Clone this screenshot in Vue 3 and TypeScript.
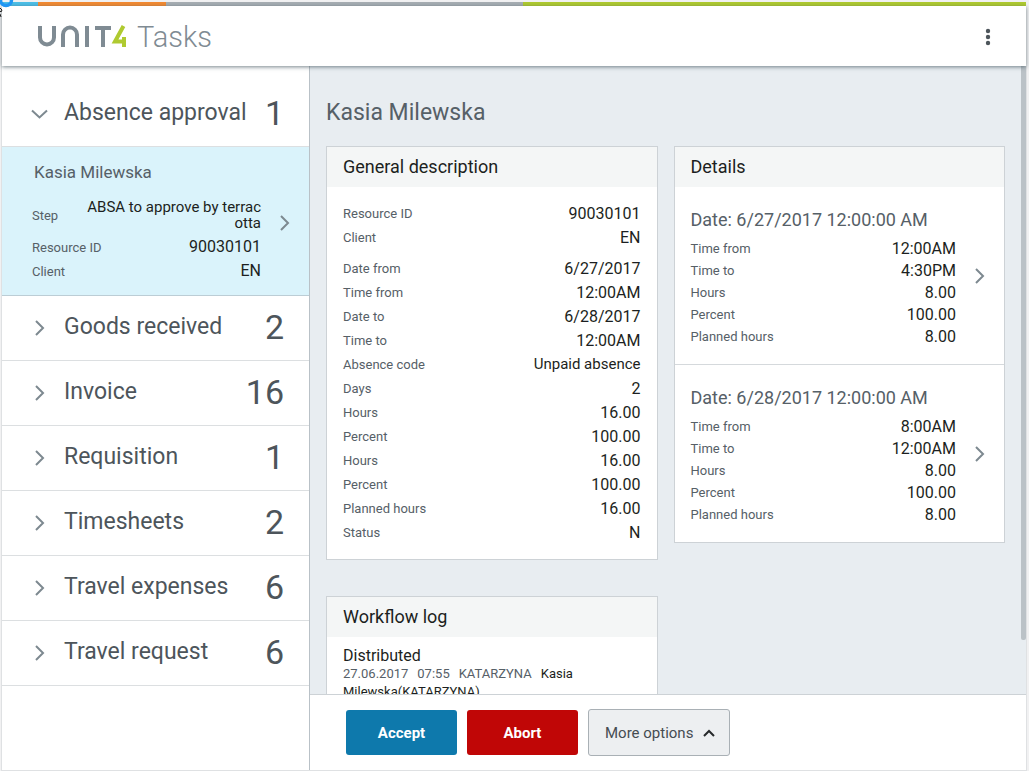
<script setup lang="ts">
import { ref } from 'vue'

interface Field {
  label: string
  value: string
  gap?: boolean
  words?: boolean
}

interface Category {
  name: string
  count: number
}

interface DetailEntry {
  title: string
  fields: Field[]
}

const openCategory = ref<string>('Absence approval')

const categories: Category[] = [
  { name: 'Absence approval', count: 1 },
  { name: 'Goods received', count: 2 },
  { name: 'Invoice', count: 16 },
  { name: 'Requisition', count: 1 },
  { name: 'Timesheets', count: 2 },
  { name: 'Travel expenses', count: 6 },
  { name: 'Travel request', count: 6 },
]

const taskFields: Field[] = [
  { label: 'Step', value: 'ABSA to approve by terracotta', words: true },
  { label: 'Resource ID', value: '90030101' },
  { label: 'Client', value: 'EN' },
]

const general: Field[] = [
  { label: 'Resource ID', value: '90030101' },
  { label: 'Client', value: 'EN' },
  { label: 'Date from', value: '6/27/2017', gap: true },
  { label: 'Time from', value: '12:00AM' },
  { label: 'Date to', value: '6/28/2017' },
  { label: 'Time to', value: '12:00AM' },
  { label: 'Absence code', value: 'Unpaid absence', words: true },
  { label: 'Days', value: '2' },
  { label: 'Hours', value: '16.00' },
  { label: 'Percent', value: '100.00' },
  { label: 'Hours', value: '16.00' },
  { label: 'Percent', value: '100.00' },
  { label: 'Planned hours', value: '16.00' },
  { label: 'Status', value: 'N' },
]

const details: DetailEntry[] = [
  {
    title: 'Date: 6/27/2017 12:00:00 AM',
    fields: [
      { label: 'Time from', value: '12:00AM' },
      { label: 'Time to', value: '4:30PM' },
      { label: 'Hours', value: '8.00' },
      { label: 'Percent', value: '100.00' },
      { label: 'Planned hours', value: '8.00' },
    ],
  },
  {
    title: 'Date: 6/28/2017 12:00:00 AM',
    fields: [
      { label: 'Time from', value: '8:00AM' },
      { label: 'Time to', value: '12:00AM' },
      { label: 'Hours', value: '8.00' },
      { label: 'Percent', value: '100.00' },
      { label: 'Planned hours', value: '8.00' },
    ],
  },
]

function toggle(name: string): void {
  openCategory.value = openCategory.value === name ? '' : name
}
</script>

<template>
  <div class="frame">
    <svg class="cursor" width="16" height="18" viewBox="0 0 16 18" aria-hidden="true">
      <circle cx="6" cy="0" r="5.500" fill="none" stroke="#2196f3" stroke-width="3.500" />
      <path d="M0 8L2 10L1 12L0 11M0 14L1 17" fill="none" stroke="#222" stroke-width="1" />
    </svg>
    <div class="strip"><i class="blue"></i><i class="orange"></i><i class="gray"></i><i class="green"></i></div>
    <header class="topbar">
      <h1 class="brand">
        <svg class="logo" width="90" height="24" viewBox="0 0 90 24" role="img" aria-label="Unit4">
          <g fill="none" stroke="#7f8b93" stroke-width="4">
            <path d="M2 1V12.500A7 7 0 0 0 16 12.500V1" />
            <path d="M25 22V9.500A7 7 0 0 1 39 9.500V22" />
            <path d="M49 1V22M57 3H73M65 3V22" />
          </g>
          <path d="M85.500 1L77 16.500H88M86 12V22" fill="none" stroke="#afca30" stroke-width="4" />
        </svg>
        <span>Tasks</span>
      </h1>
      <button class="kebab" type="button" aria-label="Menu">
        <svg width="8" height="18" viewBox="0 0 8 18" fill="#4d555b">
          <circle cx="4" cy="3" r="2.200" /><circle cx="4" cy="9" r="2.200" /><circle cx="4" cy="15" r="2.200" />
        </svg>
      </button>
    </header>
    <div class="body">
      <nav class="sidebar">
        <template v-for="c in categories" :key="c.name">
          <button class="category" type="button" :aria-expanded="openCategory === c.name" @click="toggle(c.name)">
            <svg class="chev" width="18" height="18" viewBox="0 0 18 18">
              <path v-if="openCategory === c.name" d="M2 6.500L9.500 13.500L17 6.500" />
              <path v-else d="M6 3L13 10L6 17" />
            </svg>
            <span class="name">{{ c.name }}</span>
            <span class="count">{{ c.count }}</span>
          </button>
          <a v-if="c.name === 'Absence approval' && openCategory === c.name" class="task" href="#task">
            <div class="task-main">
              <h2>Kasia Milewska</h2>
              <dl>
                <div v-for="f in taskFields" :key="f.label" class="field">
                  <dt>{{ f.label }}</dt>
                  <dd :class="{ words: f.words }">{{ f.value }}</dd>
                </div>
              </dl>
            </div>
            <svg class="chev" width="18" height="18" viewBox="0 0 18 18"><path d="M6 2L13 9L6 16" /></svg>
          </a>
        </template>
      </nav>
      <div class="content">
        <main id="task" class="detail">
          <h2 class="title">Kasia Milewska</h2>
          <div class="columns">
            <div class="column">
              <section class="card">
                <h3>General description</h3>
                <dl class="general">
                  <div v-for="(f, i) in general" :key="i" class="field" :class="{ gap: f.gap }">
                    <dt>{{ f.label }}</dt>
                    <dd :class="{ words: f.words }">{{ f.value }}</dd>
                  </div>
                </dl>
              </section>
              <section class="card">
                <h3>Workflow log</h3>
                <div class="log">
                  <p class="state">Distributed</p>
                  <p class="entry">
                    <time>27.06.2017</time><time>07:55</time><span class="user">KATARZYNA</span><span>Kasia Milewska</span>
                    <span>(KATARZYNA)</span>
                  </p>
                </div>
              </section>
            </div>
            <div class="column">
              <section class="card">
                <h3>Details</h3>
                <a v-for="d in details" :key="d.title" class="entry-link" href="#task">
                  <div class="entry-main">
                    <h4>{{ d.title }}</h4>
                    <dl>
                      <div v-for="f in d.fields" :key="f.label" class="field">
                        <dt>{{ f.label }}</dt>
                        <dd>{{ f.value }}</dd>
                      </div>
                    </dl>
                  </div>
                  <svg class="chev" width="18" height="18" viewBox="0 0 18 18"><path d="M6 2L13 9L6 16" /></svg>
                </a>
              </section>
            </div>
          </div>
          <div class="scroll-thumb"></div>
        </main>
        <footer class="actions">
          <button class="accept" type="button">Accept</button>
          <button class="abort" type="button">Abort</button>
          <button class="more" type="button">
            More options
            <svg width="14" height="10" viewBox="0 0 14 10"><path d="M2 8L7 3L12 8" fill="none" stroke="#26292b" stroke-width="2" /></svg>
          </button>
        </footer>
      </div>
    </div>
  </div>
</template>

<style>
body {
  margin: 0;
  background: #f1f1f2;
}
</style>

<style scoped>
* {
  box-sizing: border-box;
  margin: 0;
}

.frame {
  display: flex;
  flex-direction: column;
  height: 100vh;
  padding: 2px 2px 0 1px;
  font-family: Roboto, 'Liberation Sans', sans-serif;
  font-size: 16px;
  color: #1c1f21;
}

h1,
h2,
h3,
h4 {
  font-weight: 400;
}

button {
  font: inherit;
  color: inherit;
  cursor: pointer;
}

a {
  color: inherit;
  text-decoration: none;
}

.cursor {
  position: absolute;
  top: 0;
  left: 0;
  z-index: 5;
}

.strip {
  display: flex;
  flex: none;
  height: 4px;
  margin: 0 1px;
}

.blue {
  width: 36px;
  background: #4dbfe8;
}

.orange {
  width: 128px;
  background: #f38b33;
}

.gray {
  flex: 357;
  background: #a7aeb3;
}

.green {
  flex: 503;
  background: #afca30;
}

.topbar {
  display: flex;
  flex: none;
  align-items: center;
  justify-content: space-between;
  height: 60px;
  margin: 0 1px;
  padding: 2px 34px 0 36px;
  background: #fff;
  box-shadow: 0 1px 4px rgba(60, 80, 90, 0.7);
  position: relative;
  z-index: 2;
}

.brand {
  display: flex;
  align-items: center;
  gap: 9px;
  color: #7f8b93;
  font-size: 29px;
  font-weight: 300;
  line-height: 40px;
}

.kebab {
  display: flex;
  padding: 0;
  border: 0;
  background: none;
}

.body {
  display: flex;
  flex: 1;
  min-height: 0;
  border: 1px solid #dfe1e3;
  border-top: 0;
  background: #fff;
}

.sidebar {
  flex: 0 0 308px;
  padding-top: 16px;
  border-right: 1px solid #b9c1c7;
  overflow: hidden;
}

.category {
  display: flex;
  align-items: center;
  width: 100%;
  height: 65px;
  padding: 0 25px 2px 28px;
  border: 0;
  border-bottom: 1px solid #dcdfe1;
  background: none;
  color: #4d555b;
  text-align: left;
}

.chev {
  flex: none;
  fill: none;
  stroke: #7d8990;
  stroke-width: 2;
}

.name {
  flex: 1;
  margin-left: 16px;
  font-size: 23px;
  line-height: 32px;
}

.count {
  font-size: 34px;
  line-height: 40px;
}

.task {
  display: flex;
  align-items: center;
  justify-content: space-between;
  padding: 15px 16px 12px 30px;
  border-bottom: 1px solid #bccdd5;
  background: #daf3fb;
}

.task h2 {
  margin-bottom: 13px;
  padding-left: 2px;
  font-size: 17px;
  line-height: 20px;
  color: #566067;
}

.task-main {
  width: 229px;
}

.field {
  display: flex;
  align-items: center;
  justify-content: space-between;
  min-height: 24px;
}

dt {
  font-size: 13px;
  color: #566067;
  white-space: nowrap;
}

dd {
  text-align: right;
}

.words {
  font-size: 15px;
}

.task dd {
  width: 180px;
  padding: 4px 0;
  line-height: 16px;
  word-break: break-all;
}

.content {
  display: flex;
  flex: 1;
  flex-direction: column;
  min-width: 0;
}

.detail {
  position: relative;
  flex: 1;
  min-height: 0;
  padding: 31px 21px 0 16px;
  overflow: hidden;
  background: #e8edf1;
}

.title {
  font-size: 23px;
  line-height: 32px;
  color: #566067;
}

.columns {
  display: grid;
  grid-template-columns: 1fr 1fr;
  gap: 16px;
  margin-top: 17px;
}

.column {
  display: flex;
  flex-direction: column;
  gap: 36px;
}

.card {
  border: 1px solid #cdd2d6;
  background: #fff;
}

.card h3 {
  padding: 0 16px;
  background: #f4f6f6;
  font-size: 18px;
  line-height: 40px;
}

.general {
  padding: 14px 16px 15px;
}

.general .gap {
  margin-top: 7px;
}

.entry-link {
  display: flex;
  align-items: center;
  gap: 14px;
  padding: 17px 16px;
}

.entry-link + .entry-link {
  border-top: 1px solid #d5d9dc;
}

.entry-main {
  flex: 1;
}

.entry-main .field {
  min-height: 22px;
}

h4 {
  margin-bottom: 1px;
  font-size: 18px;
  line-height: 32px;
  color: #566067;
}

.log {
  padding: 10px 16px 16px;
}

.state {
  line-height: 18px;
}

.entry {
  font-size: 13px;
  line-height: 18px;
}

.entry time,
.entry .user {
  margin-right: 9px;
  color: #566067;
}

.scroll-thumb {
  position: absolute;
  top: 0;
  right: 0;
  bottom: 54px;
  width: 5px;
  border-radius: 0 0 2px 2px;
  background: #bbc2c7;
}

.actions {
  display: flex;
  flex: none;
  align-items: center;
  gap: 10px;
  height: 76px;
  padding-left: 36px;
  border-top: 1px solid #cdd2d6;
}

.actions button {
  height: 45px;
  border: 0;
  border-radius: 3px;
  font-size: 15px;
}

.actions .accept,
.actions .abort {
  width: 111px;
  background: #0e79ac;
  color: #fff;
  font-weight: 700;
}

.actions .abort {
  background: #c00606;
}

.actions .more {
  display: flex;
  align-items: center;
  gap: 9px;
  height: 47px;
  padding: 0 13px 0 16px;
  border: 1px solid #a9b0b5;
  background: #edeff1;
  color: #454c51;
}
</style>
